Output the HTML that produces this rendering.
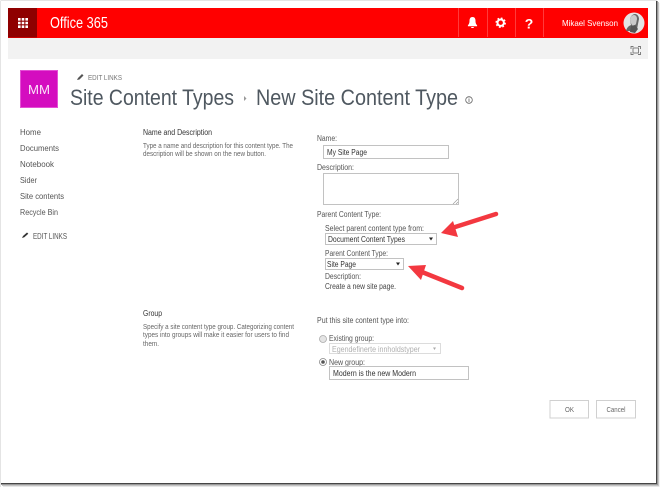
<!DOCTYPE html>
<html><head><meta charset="utf-8"><style>
html,body{margin:0;padding:0;background:#fff;width:660px;height:487px;overflow:hidden}
svg{display:block;position:absolute;left:0;top:0;font-family:"Liberation Sans",sans-serif}
</style></head><body>
<svg width="660" height="487" viewBox="0 0 660 487" xmlns="http://www.w3.org/2000/svg">
<defs><filter id="b" x="0" y="0" width="100%" height="100%"><feGaussianBlur stdDeviation="0.3"/></filter></defs>
<rect width="660" height="487" fill="#fff"/>
<g filter="url(#b)">
<path d="M0.5 487V0.5H657" fill="none" stroke="#c8c8c8"/>
<path d="M659.500 3V486.500H3" fill="none" stroke="#e6e6e6"/>
<path d="M658.500 2V485.500H2" fill="none" stroke="#c4c4c4"/>
<path d="M657.500 1V484.500H1" fill="none" stroke="#999"/>
<path d="M656.500 1V483.500H1" fill="none" stroke="#444"/>
<rect x="8" y="8" width="640" height="30" fill="#ff0000"/>
<rect x="8" y="8" width="29" height="29.500" fill="#8f0000"/>
<rect x="8" y="38" width="640" height="21" fill="#f2f2f2"/>
<g stroke="#ff3a3a"><path d="M458.500 8V37M487.500 8V37M515.500 8V37M543.500 8V37"/></g>
<g fill="#fff">
<path d="M18 18h2.600v2.600H18zM21.700 18h2.600v2.600h-2.600zM25.400 18H28v2.600h-2.600zM18 21.700h2.600v2.600H18zM21.700 21.700h2.600v2.600h-2.600zM25.400 21.700H28v2.600h-2.600zM18 25.400h2.600V28H18zM21.700 25.400h2.600V28h-2.600zM25.400 25.400H28V28h-2.600z"/>
<text x="50" y="28" font-size="15.500" textLength="58" lengthAdjust="spacingAndGlyphs">Office 365</text>
<path d="M472.500 17c-2.200 0-3 1.800-3 3.800 0 2.400-.6 3.500-1.600 4.500v.9h9.200v-.9c-1-1-1.600-2.100-1.600-4.500 0-2-.8-3.800-3-3.800zM471 27h3c0 .7-.6 1-1.500 1s-1.500-.3-1.500-1z"/>
<text x="529" y="28.500" font-size="14" font-weight="700" text-anchor="middle">?</text>
<text x="562" y="26" font-size="8.500" textLength="56" lengthAdjust="spacingAndGlyphs">Mikael Svenson</text>
</g>
<g fill="none" stroke="#fff">
<circle cx="500.700" cy="22.700" r="3.200" stroke-width="2"/>
<circle cx="500.700" cy="22.700" r="4.500" stroke-width="1.500" stroke-dasharray="1.800 1.730"/>
</g>
<circle cx="634" cy="23" r="10.500" fill="#e4e4e4"/>
<path d="M626 31c1-4 3-5 5-6l-1-5c0-4 3-6 5-6s4 2 4 5l-1 5-1 5-4 2z" fill="#666"/>
<path d="M630 20c0-3 2-5 4-5s3 2 3 4l-1 5-2 2c-2 0-3-2-4-6z" fill="#c9c9c9"/>
<path d="M631 26l4-1 3 4-3 4-5-1z" fill="#555"/>
<g fill="none" stroke="#777" stroke-width="0.900">
<path d="M631 49v-2.500h2.500M638 46.500h2.500v2.500M640.500 52v2.500H638M633.500 54.500H631V52"/>
<rect x="633" y="48" width="5.500" height="5"/>
</g>
<rect x="20" y="70" width="38" height="38" fill="#d40dbf"/>
<rect x="20.500" y="70.500" width="37" height="37" fill="none" stroke="#e44fd5"/>
<text x="39" y="94" font-size="13" fill="#fbe4f8" text-anchor="middle" textLength="22" lengthAdjust="spacingAndGlyphs">MM</text>
<path d="M77 80l1-2 4-4 1.500 1.500-4 4z" fill="#555"/>
<text x="88" y="80" font-size="7.500" fill="#777" textLength="34" lengthAdjust="spacingAndGlyphs">EDIT LINKS</text>
<g fill="#4f5860" font-size="22.500">
<text x="70" y="105" textLength="164" lengthAdjust="spacingAndGlyphs">Site Content Types</text>
<text x="256" y="105" textLength="202" lengthAdjust="spacingAndGlyphs">New Site Content Type</text>
</g>
<path d="M244 96l2.500 2.500-2.500 2.500z" fill="#9a9a9a"/>
<circle cx="469" cy="100" r="3.300" fill="none" stroke="#666" stroke-width="0.800"/>
<path d="M469 99v3M469 97.800v.7" stroke="#666" stroke-width="0.800"/>
<g fill="#555" font-size="8.500">
<text x="20" y="135" textLength="21" lengthAdjust="spacingAndGlyphs">Home</text>
<text x="20" y="151" textLength="39" lengthAdjust="spacingAndGlyphs">Documents</text>
<text x="20" y="167" textLength="34" lengthAdjust="spacingAndGlyphs">Notebook</text>
<text x="20" y="183" textLength="17" lengthAdjust="spacingAndGlyphs">Sider</text>
<text x="20" y="199" textLength="44" lengthAdjust="spacingAndGlyphs">Site contents</text>
<text x="20" y="215" textLength="38" lengthAdjust="spacingAndGlyphs">Recycle Bin</text>
</g>
<path d="M22 238l1-2 4-3.500 1.300 1.300-4 3.500z" fill="#333"/>
<text x="33" y="239" font-size="7.800" fill="#555" textLength="34" lengthAdjust="spacingAndGlyphs">EDIT LINKS</text>
<text x="143" y="135" font-size="7.800" fill="#333" textLength="69" lengthAdjust="spacingAndGlyphs">Name and Description</text>
<g fill="#666" font-size="7">
<text x="143" y="148" textLength="150" lengthAdjust="spacingAndGlyphs">Type a name and description for this content type. The</text>
<text x="143" y="156" textLength="123" lengthAdjust="spacingAndGlyphs">description will be shown on the new button.</text>
</g>
<text x="143" y="316" font-size="7.800" fill="#333" textLength="19" lengthAdjust="spacingAndGlyphs">Group</text>
<g fill="#666" font-size="7">
<text x="143" y="329" textLength="151" lengthAdjust="spacingAndGlyphs">Specify a site content type group. Categorizing content</text>
<text x="143" y="337" textLength="146" lengthAdjust="spacingAndGlyphs">types into groups will make it easier for users to find</text>
<text x="143" y="346" textLength="16" lengthAdjust="spacingAndGlyphs">them.</text>
</g>
<g fill="#555" font-size="7.800">
<text x="317" y="141" textLength="20" lengthAdjust="spacingAndGlyphs">Name:</text>
<text x="317" y="170" textLength="37" lengthAdjust="spacingAndGlyphs">Description:</text>
<text x="317" y="217" textLength="64" lengthAdjust="spacingAndGlyphs">Parent Content Type:</text>
<text x="325" y="231" textLength="99" lengthAdjust="spacingAndGlyphs">Select parent content type from:</text>
<text x="325" y="256" textLength="63" lengthAdjust="spacingAndGlyphs">Parent Content Type:</text>
<text x="325" y="279" textLength="36" lengthAdjust="spacingAndGlyphs">Description:</text>
<text x="325" y="289" fill="#444" textLength="71" lengthAdjust="spacingAndGlyphs">Create a new site page.</text>
<text x="317" y="323" textLength="92" lengthAdjust="spacingAndGlyphs">Put this site content type into:</text>
<text x="329" y="341" textLength="45" lengthAdjust="spacingAndGlyphs">Existing group:</text>
<text x="329" y="365" textLength="36" lengthAdjust="spacingAndGlyphs">New group:</text>
</g>
<g fill="#fff" stroke="#c2c2c2">
<rect x="323.500" y="145.500" width="125" height="13"/>
<rect x="323.500" y="173.500" width="135" height="31"/>
<rect x="325.500" y="233.500" width="111" height="11"/>
<rect x="325.500" y="258.500" width="78" height="11"/>
<rect x="329.500" y="366.500" width="139" height="13"/>
</g>
<rect x="329.500" y="343.500" width="111" height="10" fill="#fff" stroke="#dcdcdc"/>
<path d="M456 204l2-2M453 204l5-5" stroke="#999" stroke-width="0.600"/>
<g fill="#333" font-size="7.800">
<text x="327" y="155" textLength="40" lengthAdjust="spacingAndGlyphs">My Site Page</text>
<text x="328" y="242" textLength="77" lengthAdjust="spacingAndGlyphs">Document Content Types</text>
<text x="327" y="267" textLength="29" lengthAdjust="spacingAndGlyphs">Site Page</text>
<text x="333" y="376" textLength="83" lengthAdjust="spacingAndGlyphs">Modern is the new Modern</text>
</g>
<text x="332" y="352" font-size="7.800" fill="#b0b0b0" textLength="88" lengthAdjust="spacingAndGlyphs">Egendefinerte innholdstyper</text>
<path d="M429 237.500h4l-2 3zM396 262.500h4l-2 3z" fill="#222"/>
<path d="M433 347.500h3l-1.500 2.500z" fill="#aaa"/>
<circle cx="323" cy="339" r="3.500" fill="#e4e4e4" stroke="#aaa" stroke-width="0.800"/>
<circle cx="323" cy="362" r="3.500" fill="#fff" stroke="#888" stroke-width="0.800"/>
<circle cx="323" cy="362" r="1.800" fill="#555"/>
<path d="M452 228L496 214" stroke="#f3383f" stroke-width="4.500" stroke-linecap="round"/>
<path d="M422 272L462 288" stroke="#f3383f" stroke-width="4.500" stroke-linecap="round"/>
<path d="M441 233L453 221 458 237z" fill="#f3383f"/>
<path d="M408 266L426 265 421 280z" fill="#f3383f"/>
<g fill="#fff" stroke="#d0d0d0">
<rect x="550" y="400.500" width="38.500" height="17.500"/>
<rect x="596.500" y="400.500" width="39" height="17.500"/>
</g>
<g fill="#666" font-size="7.500" text-anchor="middle">
<text x="569.500" y="412" textLength="9" lengthAdjust="spacingAndGlyphs">OK</text>
<text x="616" y="412" textLength="19" lengthAdjust="spacingAndGlyphs">Cancel</text>
</g>
</g>
</svg>
</body></html>
